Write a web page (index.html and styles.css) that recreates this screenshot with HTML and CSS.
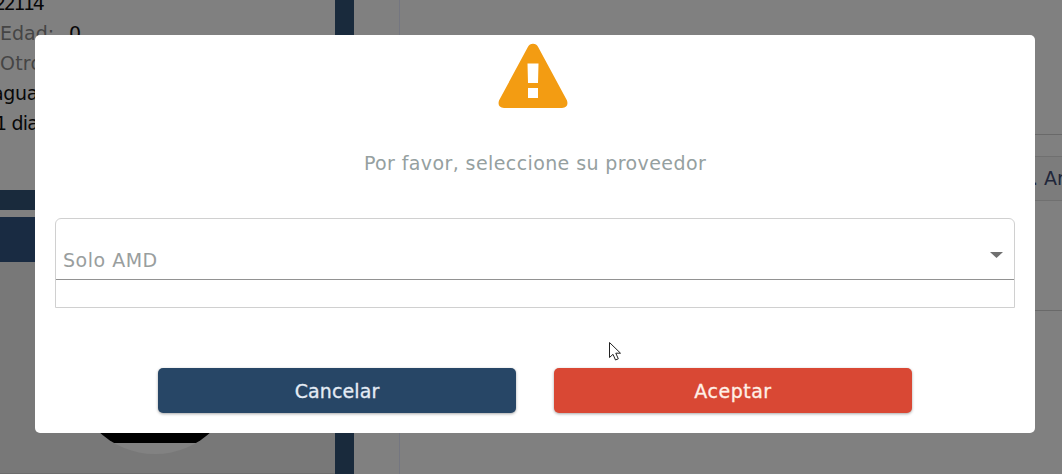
FILE: index.html
```html
<!DOCTYPE html>
<html lang="es">
<head>
<meta charset="utf-8">
<title>Seleccione su proveedor</title>
<link rel="stylesheet" href="styles.css">
</head>
<body>
<main class="page">
  <aside class="sidebar">
    <div class="details">
      <div class="row"><span class="t22114">22114</span></div>
      <div class="row"><span class="label edad">Edad:</span><span class="zero">0</span></div>
      <div class="row"><span class="label otro">Otro</span></div>
      <div class="row"><span class="agua">agua</span></div>
      <div class="row"><span class="dia">1 dia</span></div>
    </div>
    <div class="band"></div>
    <div class="band tall"></div>
    <div class="profile"><div class="avatar"></div></div>
  </aside>
  <div class="divider"></div>
  <div class="gutter"></div>
  <section class="content">
    <div class="panel-top"></div>
    <div class="panel-gap"></div>
    <div class="panel-bar"><span>. Ar</span></div>
    <div class="panel-body"></div>
  </section>
</main>
<div class="modal" role="dialog">
  <svg class="warning" width="70" height="65" viewBox="0 0 70 65">
    <path d="M30 3.800Q31.500 .8 35 .8t5 3L69 57.500Q71 64.500 64 65H6Q-1 64.500 1 57.500Z" fill="#f39c12"/>
    <path d="M29.500 20.500H40.500L40 40H30ZM30 45H40V55H30Z" fill="#fff"/>
  </svg>
  <p class="message"><span>Por favor, seleccione su proveedor</span></p>
  <div class="field">
    <div class="select"><span class="value">Solo AMD</span><span class="caret"></span></div>
  </div>
  <div class="actions">
    <button class="btn cancel"><span>Cancelar</span></button>
    <button class="btn accept"><span>Aceptar</span></button>
  </div>
</div>
<svg class="cursor" width="14" height="20" viewBox="0 0 14 20">
  <path d="M1.500 1.500V16.500L5 13.300L7.500 19L10.300 17.800L7.800 12.200H12.500Z" fill="#fff" stroke="#222" stroke-width="1"/>
</svg>
</body>
</html>
```
FILE: styles.css
```css
* { box-sizing: border-box; }
body { margin: 0; width: 1062px; height: 474px; overflow: hidden; position: relative; background: #808080; font: 19px/30px "DejaVu Sans", sans-serif; }
.page { display: flex; height: 474px; }
.sidebar { width: 335px; flex: none; display: flex; flex-direction: column; overflow: hidden; }
.details { height: 190px; flex: none; color: #080808; }
.row { height: 30px; white-space: nowrap; display: flex; }
.row:first-child { height: 18px; line-height: 6px; }
.row span { display: block; }
.t22114 { margin-left: -6px; letter-spacing: -2.4px; }
.label { color: #454545; }
.edad { width: 69px; }
.otro { letter-spacing: .2px; }
.agua { margin-left: -8px; letter-spacing: -.3px; }
.dia { margin-left: -5px; letter-spacing: -.8px; }
.band { height: 20px; flex: none; margin-bottom: 7px; background: #192a3c; }
.band.tall { height: 45px; margin-bottom: 0; background: #192b42; }
.profile { flex: 1; padding: 28px 0 0 73px; background: #787878; border-bottom: 1px solid #6c6c6c; }
.avatar { width: 164px; height: 164px; border-radius: 50%; background: linear-gradient(#000 153px, #828282 153px); }
.divider { width: 19px; flex: none; background: #192a3c; }
.gutter { width: 46px; flex: none; border-right: 1px solid #747680; }
.content { flex: 1; min-width: 0; display: flex; flex-direction: column; }
.panel-top { height: 135px; border-bottom: 1px solid #696969; }
.panel-gap { height: 22px; border-bottom: 1px solid #707070; }
.panel-bar { height: 44px; padding: 6px 0 0 632px; border-bottom: 1px solid #707070; background: #7c7c7c; color: #20263a; white-space: nowrap; overflow: hidden; }
.panel-body { height: 110px; border-bottom: 1px solid #696969; }
.modal { position: absolute; left: 35px; top: 35px; width: 1000px; height: 398px; padding: 8px 20px 20px; border-radius: 5px; background: #fff; display: flex; flex-direction: column; align-items: center; }
.warning { display: block; margin-right: 5px; flex: none; }
.message { margin: 40px 0 0; height: 70px; color: #95a0a0; white-space: nowrap; letter-spacing: .4px; }
.field { width: 960px; height: 90px; border: 1px solid #d0d0d0; border-radius: 6px 6px 0 0; }
.select { height: 61px; border-bottom: 1px solid #929292; padding: 26px 11px 0 7px; display: flex; justify-content: space-between; color: #999e9e; letter-spacing: .5px; }
.caret { width: 13px; height: 6px; margin-top: 7px; background: #707070; clip-path: polygon(0 0, 100% 0, 50% 100%); }
.actions { display: flex; gap: 38px; margin-top: 60px; }
.btn { width: 358px; height: 45px; border: 0; border-radius: 5px; padding: 1px 0 0; color: #e4ecf5; font: 19px "DejaVu Sans", sans-serif; letter-spacing: .1px; -webkit-text-stroke: .3px currentColor; box-shadow: 0 1px 3px rgba(0,0,0,.35); }
.cancel { background: #274666; }
.accept { background: #d94834; color: #fff0e7; letter-spacing: .5px; }
.cursor { position: absolute; left: 608px; top: 341px; }
```
